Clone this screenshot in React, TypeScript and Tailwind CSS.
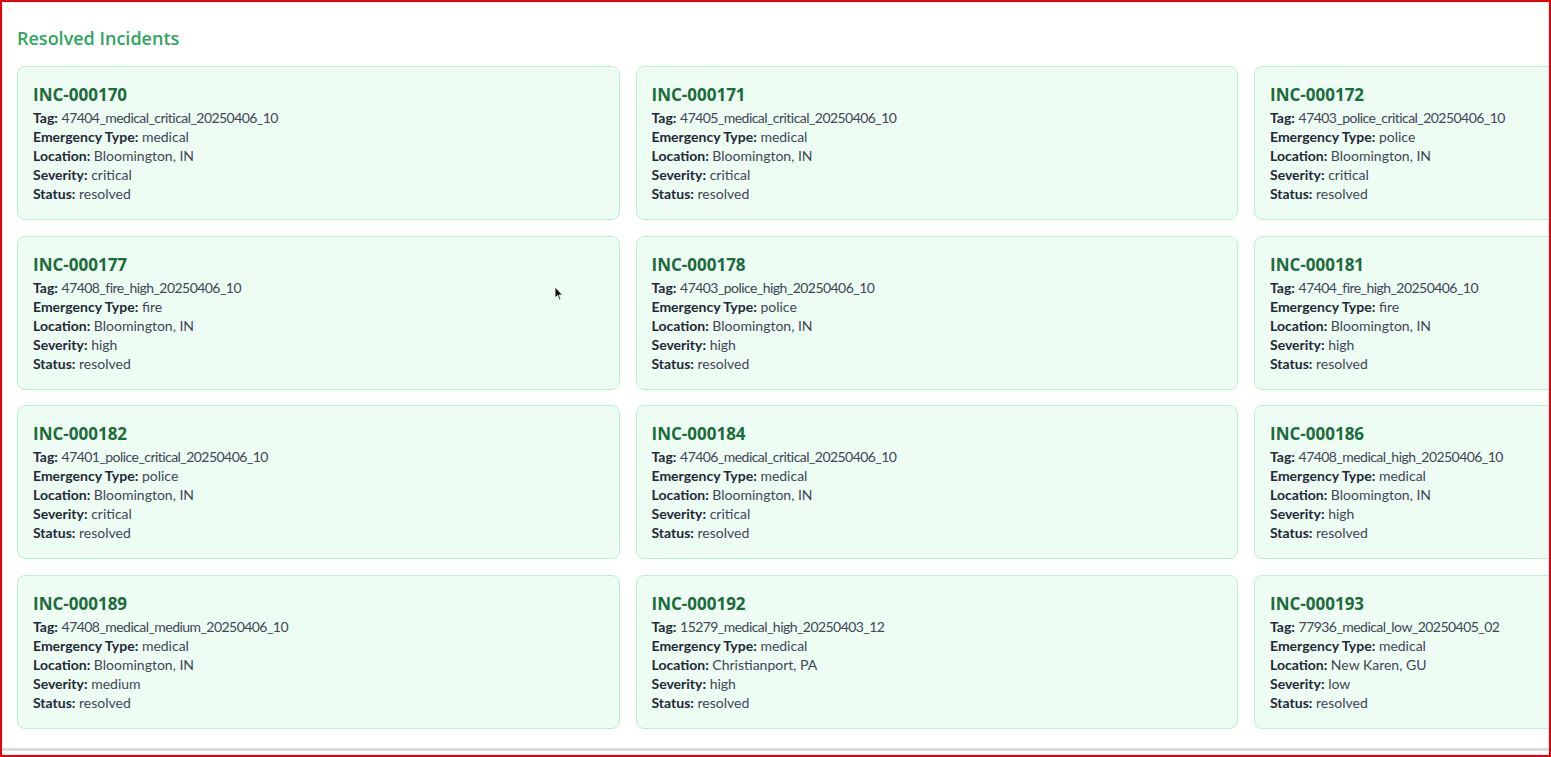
import React from "react";

type Inc = { id: string; tag: string; type: string; loc: string; sev: string };

const data: Inc[] = [
  { id: "INC-000170", tag: "47404_medical_critical_20250406_10", type: "medical", loc: "Bloomington, IN", sev: "critical" },
  { id: "INC-000171", tag: "47405_medical_critical_20250406_10", type: "medical", loc: "Bloomington, IN", sev: "critical" },
  { id: "INC-000172", tag: "47403_police_critical_20250406_10", type: "police", loc: "Bloomington, IN", sev: "critical" },
  { id: "INC-000177", tag: "47408_fire_high_20250406_10", type: "fire", loc: "Bloomington, IN", sev: "high" },
  { id: "INC-000178", tag: "47403_police_high_20250406_10", type: "police", loc: "Bloomington, IN", sev: "high" },
  { id: "INC-000181", tag: "47404_fire_high_20250406_10", type: "fire", loc: "Bloomington, IN", sev: "high" },
  { id: "INC-000182", tag: "47401_police_critical_20250406_10", type: "police", loc: "Bloomington, IN", sev: "critical" },
  { id: "INC-000184", tag: "47406_medical_critical_20250406_10", type: "medical", loc: "Bloomington, IN", sev: "critical" },
  { id: "INC-000186", tag: "47408_medical_high_20250406_10", type: "medical", loc: "Bloomington, IN", sev: "high" },
  { id: "INC-000189", tag: "47408_medical_medium_20250406_10", type: "medical", loc: "Bloomington, IN", sev: "medium" },
  { id: "INC-000192", tag: "15279_medical_high_20250403_12", type: "medical", loc: "Christianport, PA", sev: "high" },
  { id: "INC-000193", tag: "77936_medical_low_20250405_02", type: "medical", loc: "New Karen, GU", sev: "low" },
];

function Row({ label, value, tight }: { label: string; value: string; tight?: boolean }) {
  return (
    <div className="text-[14px] leading-[19px] text-[#3f4654]">
      <span className="font-bold text-[#1f2937]">{label}:</span>{" "}
      <span className={tight ? "tracking-[-0.55px]" : ""}>{value}</span>
    </div>
  );
}

function Card({ inc }: { inc: Inc }) {
  return (
    <div className="h-[154px] rounded-lg border border-[#bdf0d3] bg-[#edfdf4] px-[15px] pt-[14px]">
      <div className="text-[17px] font-bold leading-[27px] text-[#1c6b3a]" style={{ fontFamily: '"Open Sans", sans-serif' }}>
        {inc.id}
      </div>
      <Row label="Tag" value={inc.tag} tight />
      <Row label="Emergency Type" value={inc.type} />
      <Row label="Location" value={inc.loc} />
      <Row label="Severity" value={inc.sev} />
      <Row label="Status" value="resolved" />
    </div>
  );
}

export default function App() {
  return (
    <div
      className="relative h-[757px] w-[1551px] overflow-hidden border-2 border-red-600 bg-white"
      style={{ fontFamily: 'Lato, "Open Sans", sans-serif' }}
    >
      <div className="h-[749px] overflow-hidden border-b-[3px] border-[#dcdcdc] pl-[15px] pt-[22px]">
        <h2
          className="mb-[14px] text-[18px] font-semibold leading-[28px] text-[#2ea55f]"
          style={{ fontFamily: '"Open Sans", sans-serif' }}
        >
          Resolved Incidents
        </h2>
        <div className="grid w-[1840px] grid-cols-[602.5px_602.5px_602.5px] gap-x-4 gap-y-[15.5px]">
          {data.map((inc) => (
            <Card key={inc.id} inc={inc} />
          ))}
        </div>
      </div>
      <svg className="absolute left-[552px] top-[284px]" width="10" height="15" viewBox="0 0 10 15">
        <path d="M1 1 L1 12 L3.5 9.5 L5.5 14 L7 13.3 L5 9 L8.5 9 Z" fill="#111" stroke="#fff" strokeWidth="0.8" />
      </svg>
    </div>
  );
}
